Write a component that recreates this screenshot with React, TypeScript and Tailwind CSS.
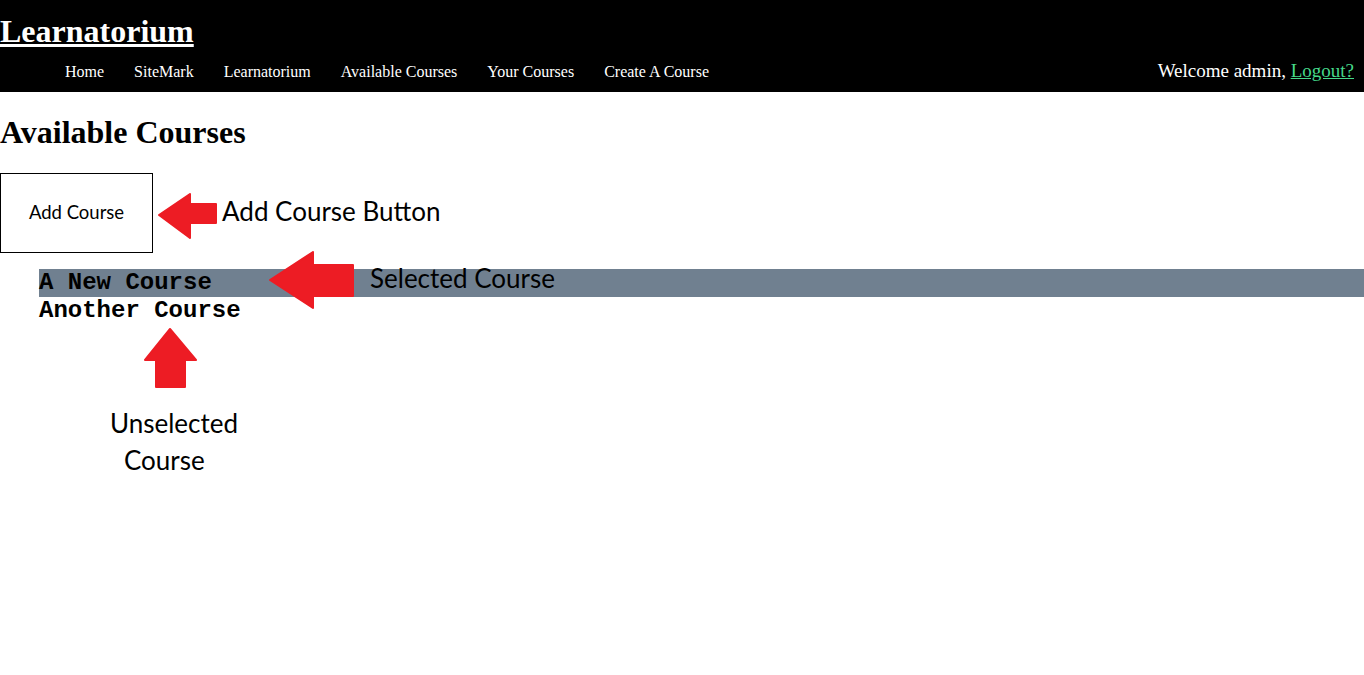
import React from "react";

const navLinks = ["Home", "SiteMark", "Learnatorium", "Available Courses", "Your Courses", "Create A Course"];
const courses = ["A New Course", "Another Course"];

const ArrowLeft = ({ w, h, points, className }: { w: number; h: number; points: string; className: string }) => (
  <svg width={w} height={h} viewBox={`-1 -1 ${w} ${h}`} className={className}>
    <polygon points={points} fill="#ed1c24" stroke="#ed1c24" strokeWidth={2} strokeLinejoin="round" />
  </svg>
);

export default function App() {
  const [selected, setSelected] = React.useState(0);

  return (
    <div className="relative min-h-screen bg-white text-black font-['Liberation_Serif',serif]">
      <header className="h-[92px] bg-black pt-[13px] text-white">
        <h1 className="text-[32px] font-bold leading-[36px]">
          <a href="#" className="underline">Learnatorium</a>
        </h1>
        <div className="mt-[11px] flex items-baseline justify-between">
          <nav className="flex gap-[30px] pl-[65px] text-[16px] leading-[18px]">
            {navLinks.map((l) => (
              <a key={l} href="#" className="text-white">{l}</a>
            ))}
          </nav>
          <div className="pr-[10px] text-[19px] leading-[22px]">
            Welcome admin, <a href="#" className="text-[#46d98a] underline">Logout?</a>
          </div>
        </div>
      </header>

      <main className="flex flex-col items-start pt-[22px]">
        <h2 className="text-[32px] font-bold leading-[36px]">Available Courses</h2>
        <button className="mt-[23px] flex h-[80px] w-[153px] items-center justify-center border border-black bg-white font-['Lato',sans-serif] text-[18.5px]">
          Add Course
        </button>
        <ul className="mt-[16px] w-full pl-[39px] font-['Liberation_Mono','Courier_New',monospace] text-[24px] font-bold leading-[28px]">
          {courses.map((c, i) => (
            <li
              key={c}
              onClick={() => setSelected(i)}
              className={i === selected ? "cursor-pointer bg-[#708090]" : "cursor-pointer"}
            >
              {c}
            </li>
          ))}
        </ul>
      </main>

      {/* annotations drawn over the page */}
      <ArrowLeft w={59} h={46} points="0,21 31,0 31,10 57,10 57,29 31,29 31,44" className="absolute left-[158px] top-[193px]" />
      <span className="absolute left-[222px] top-[198px] font-['Lato',sans-serif] text-[26px] leading-none whitespace-nowrap">
        Add Course Button
      </span>

      <ArrowLeft w={85} h={58} points="0,28 43,0 43,13 83,13 83,44 43,44 43,56" className="absolute left-[269px] top-[251px]" />
      <span className="absolute left-[370px] top-[265px] font-['Lato',sans-serif] text-[26px] leading-none whitespace-nowrap">
        Selected Course
      </span>

      <ArrowLeft w={53} h={60} points="25,0 51,31 40,31 40,58 11,58 11,31 0,31" className="absolute left-[144px] top-[328px]" />
      <div className="absolute left-[110px] top-[405px] font-['Lato',sans-serif] text-[26px] leading-[37px]">
        <div>Unselected</div>
        <div className="pl-[14px]">Course</div>
      </div>
    </div>
  );
}
